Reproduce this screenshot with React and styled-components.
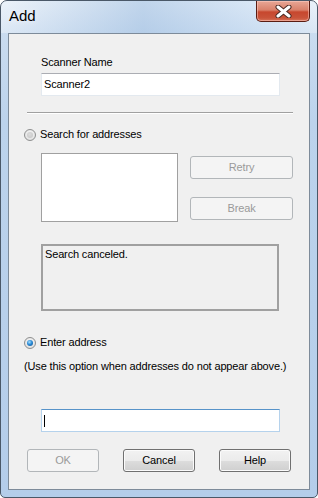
import React from "react";
import styled, { createGlobalStyle } from "styled-components";

const GlobalStyle = createGlobalStyle`
  html, body {
    margin: 0;
    padding: 0;
    background: #ffffff;
  }
  body {
    font-family: "Liberation Sans", Arial, sans-serif;
    font-size: 11px;
    letter-spacing: -0.15px;
    color: #000;
  }
`;

const Frame = styled.div`
  width: 318px;
  height: 498px;
  box-sizing: border-box;
  display: flex;
  flex-direction: column;
  border: 1px solid #4a5868;
  border-radius: 7px 7px 5px 5px;
  overflow: hidden;
  background: linear-gradient(
    to bottom,
    #e2ecf7 0px,
    #cadcf0 30px,
    #bcd3ec 120px,
    #b4cdea 100%
  );
`;

const TitleBar = styled.div`
  height: 32px;
  display: flex;
  align-items: flex-start;
  background: linear-gradient(
    to right,
    rgba(255, 255, 255, 0.35) 0%,
    rgba(165, 194, 226, 0.55) 45%,
    rgba(205, 224, 244, 0.4) 80%,
    rgba(255, 255, 255, 0.3) 100%
  );
`;

const Title = styled.div`
  padding: 6px 0 0 8px;
  font-family: "Liberation Sans", Arial, sans-serif;
  font-size: 15px;
  line-height: 17px;
  letter-spacing: 0;
  color: #000;
  text-shadow: 0 0 6px rgba(255, 255, 255, 0.9);
`;

const CloseButton = styled.div`
  margin-left: auto;
  margin-right: 7px;
  width: 54px;
  height: 21px;
  box-sizing: border-box;
  border: 1px solid #5a1c12;
  border-top: none;
  border-radius: 0 0 5px 5px;
  display: flex;
  align-items: center;
  justify-content: center;
  background: linear-gradient(
    to bottom,
    #e8a796 0%,
    #d9816b 45%,
    #c7472e 55%,
    #c9543a 85%,
    #d8755c 100%
  );
  box-shadow: inset 0 0 0 1px rgba(255, 210, 200, 0.5);
`;

const Client = styled.div`
  flex: 1;
  margin: 0 7px 7px 7px;
  border: 1px solid #7d8b9a;
  background: #f0f0f0;
  display: flex;
  flex-direction: column;
`;

const Label = styled.div`
  margin: ${(p) => p.$top}px 0 0 32px;
  line-height: 13px;
  white-space: nowrap;
`;

const TextBox = styled.div`
  margin: ${(p) => p.$top}px 0 0 32px;
  width: 239px;
  height: 23px;
  box-sizing: border-box;
  background: #ffffff;
  border: 1px solid ${(p) => (p.$focused ? "#b5d2ec" : "#e3e9ef")};
  border-top-color: ${(p) => (p.$focused ? "#5793c9" : "#abadb3")};
  padding-left: 2px;
  display: flex;
  align-items: center;
  line-height: 13px;
`;

const Caret = styled.span`
  width: 1px;
  height: 12px;
  background: #000;
`;

const Separator = styled.div`
  margin: 16px 16px 0 18px;
  height: 0;
  border-top: 1px solid #a0a0a0;
  border-bottom: 1px solid #ffffff;
`;

const RadioRow = styled.div`
  margin: ${(p) => p.$top}px 0 0 15px;
  display: flex;
  align-items: center;
  gap: 4px;
  line-height: 13px;
`;

const RadioDot = styled.span`
  width: 12px;
  height: 12px;
  box-sizing: border-box;
  border-radius: 50%;
  border: 1px solid #8e8f8f;
  background: radial-gradient(circle at 50% 40%, #fbfbfb 0%, #e2e2e2 70%, #d0d0d0 100%);
  display: flex;
  align-items: center;
  justify-content: center;

  &::after {
    content: "";
    width: 6px;
    height: 6px;
    border-radius: 50%;
    background: ${(p) =>
      p.$checked
        ? "radial-gradient(circle at 40% 35%, #a8e0ff 0%, #2b8bd6 45%, #0c4c8c 100%)"
        : "radial-gradient(circle at 45% 40%, #dcdcdc 0%, #c4c4c4 100%)"};
  }
`;

const SearchArea = styled.div`
  margin: 12px 0 0 32px;
  display: flex;
  align-items: flex-start;
`;

const ListBox = styled.div`
  width: 137px;
  height: 69px;
  box-sizing: border-box;
  background: #ffffff;
  border: 1px solid #a0a0a0;
`;

const SideButtons = styled.div`
  margin-left: 12px;
  padding-top: 3px;
  display: flex;
  flex-direction: column;
  gap: 18px;
`;

const PushButton = styled.button`
  width: ${(p) => p.$width || 72}px;
  height: 23px;
  box-sizing: border-box;
  margin: 0;
  padding: 0;
  font-family: "Liberation Sans", Arial, sans-serif;
  font-size: 11px;
  letter-spacing: -0.15px;
  line-height: 13px;
  border-radius: 3px;
  border: 1px solid ${(p) => (p.disabled ? "#b2b6b9" : "#707070")};
  color: ${(p) => (p.disabled ? "#9a9a9a" : "#000000")};
  background: ${(p) =>
    p.disabled
      ? "#f4f4f4"
      : "linear-gradient(to bottom, #f2f2f2 0%, #ebebeb 50%, #dddddd 51%, #cfcfcf 100%)"};
  box-shadow: ${(p) => (p.disabled ? "none" : "inset 0 0 0 1px #fbfbfb")};
`;

const StatusBox = styled.div`
  margin: 22px 0 0 32px;
  width: 238px;
  height: 67px;
  box-sizing: border-box;
  border: 2px solid #a0a0a0;
  padding: 2px 0 0 2px;
  line-height: 13px;
`;

const Note = styled.div`
  margin: 11px 0 0 15px;
  line-height: 13px;
  white-space: nowrap;
`;

const ButtonRow = styled.div`
  margin: 17px 0 0 18px;
  display: flex;
  gap: 24px;
`;

function CloseGlyph() {
  return (
    <svg width="17" height="13" viewBox="0 0 17 13">
      <path d="M3 2 L14 11 M14 2 L3 11" stroke="#4a2a24" strokeWidth="5" strokeLinecap="round" />
      <path d="M3 2 L14 11 M14 2 L3 11" stroke="#ffffff" strokeWidth="3" strokeLinecap="round" />
    </svg>
  );
}

function Radio({ checked, label, top }) {
  return (
    <RadioRow $top={top}>
      <RadioDot $checked={checked} />
      <span>{label}</span>
    </RadioRow>
  );
}

export default function App() {
  return (
    <>
      <GlobalStyle />
      <Frame>
        <TitleBar>
          <Title>Add</Title>
          <CloseButton>
            <CloseGlyph />
          </CloseButton>
        </TitleBar>
        <Client>
          <Label $top={22}>Scanner Name</Label>
          <TextBox $top={4}>Scanner2</TextBox>
          <Separator />
          <Radio top={14} label="Search for addresses" />
          <SearchArea>
            <ListBox />
            <SideButtons>
              <PushButton $width={103} disabled>
                Retry
              </PushButton>
              <PushButton $width={103} disabled>
                Break
              </PushButton>
            </SideButtons>
          </SearchArea>
          <StatusBox>Search canceled.</StatusBox>
          <Radio top={25} checked label="Enter address" />
          <Note>(Use this option when addresses do not appear above.)</Note>
          <TextBox $top={36} $focused>
            <Caret />
          </TextBox>
          <ButtonRow>
            <PushButton disabled>OK</PushButton>
            <PushButton>Cancel</PushButton>
            <PushButton>Help</PushButton>
          </ButtonRow>
        </Client>
      </Frame>
    </>
  );
}
